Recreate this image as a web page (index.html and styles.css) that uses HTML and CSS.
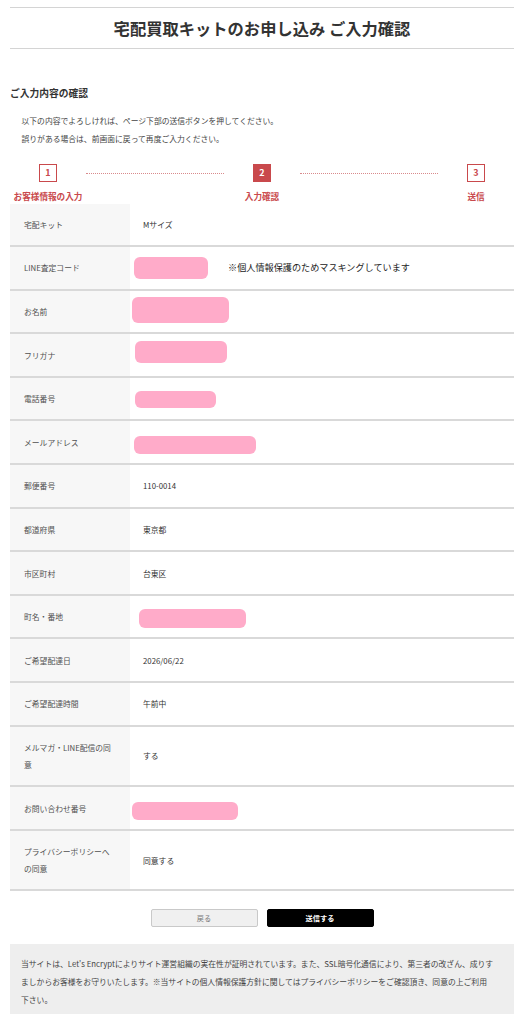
FILE: index.html
```html
<!DOCTYPE html>
<html lang="ja">
<head>
<meta charset="utf-8">
<title>宅配買取キットのお申し込み ご入力確認</title>
<link rel="stylesheet" href="styles.css">
</head>
<body>
<div class="page">
  <header class="header">
    <h1>宅配買取キットのお申し込み ご入力確認</h1>
  </header>

  <h2 class="section-title">ご入力内容の確認</h2>
  <div class="intro">
    <p>以下の内容でよろしければ、ページ下部の送信ボタンを押してください。</p>
    <p>誤りがある場合は、前画面に戻って再度ご入力ください。</p>
  </div>

  <div class="steps">
    <div class="step">
      <span class="num">1</span>
      <span class="step-label">お客様情報の入力</span>
    </div>
    <div class="step-line"></div>
    <div class="step current">
      <span class="num">2</span>
      <span class="step-label">入力確認</span>
    </div>
    <div class="step-line"></div>
    <div class="step">
      <span class="num">3</span>
      <span class="step-label">送信</span>
    </div>
  </div>

  <div class="table">
    <div class="row">
      <div class="label">宅配キット</div>
      <div class="value"><span class="val-text">Mサイズ</span></div>
    </div>
    <div class="row">
      <div class="label">LINE査定コード</div>
      <div class="value"><span class="mask mask-line"></span><span class="note">※個人情報保護のためマスキングしています</span></div>
    </div>
    <div class="row">
      <div class="label">お名前</div>
      <div class="value"><span class="mask mask-name"></span></div>
    </div>
    <div class="row">
      <div class="label">フリガナ</div>
      <div class="value"><span class="mask mask-kana"></span></div>
    </div>
    <div class="row">
      <div class="label">電話番号</div>
      <div class="value"><span class="mask mask-tel"></span></div>
    </div>
    <div class="row">
      <div class="label">メールアドレス</div>
      <div class="value"><span class="mask mask-mail"></span></div>
    </div>
    <div class="row">
      <div class="label">郵便番号</div>
      <div class="value"><span class="val-text">110-0014</span></div>
    </div>
    <div class="row">
      <div class="label">都道府県</div>
      <div class="value"><span class="val-text">東京都</span></div>
    </div>
    <div class="row">
      <div class="label">市区町村</div>
      <div class="value"><span class="val-text">台東区</span></div>
    </div>
    <div class="row">
      <div class="label">町名・番地</div>
      <div class="value"><span class="mask mask-addr"></span></div>
    </div>
    <div class="row">
      <div class="label">ご希望配達日</div>
      <div class="value"><span class="val-text">2026/06/22</span></div>
    </div>
    <div class="row">
      <div class="label">ご希望配達時間</div>
      <div class="value"><span class="val-text">午前中</span></div>
    </div>
    <div class="row">
      <div class="label">メルマガ・LINE配信の同意</div>
      <div class="value"><span class="val-text">する</span></div>
    </div>
    <div class="row">
      <div class="label">お問い合わせ番号</div>
      <div class="value"><span class="mask mask-inq"></span></div>
    </div>
    <div class="row">
      <div class="label">プライバシーポリシーへの同意</div>
      <div class="value"><span class="val-text">同意する</span></div>
    </div>
  </div>

  <div class="actions">
    <button class="btn btn-back" type="button">戻る</button>
    <button class="btn btn-submit" type="button">送信する</button>
  </div>

  <div class="notice">当サイトは、Let's Encryptによりサイト運営組織の実在性が証明されています。また、SSL暗号化通信により、第三者の改ざん、成りす<br>ましからお客様をお守りいたします。※当サイトの個人情報保護方針に関してはプライバシーポリシーをご確認頂き、同意の上ご利用<br>下さい。</div>
</div>
</body>
</html>
```

FILE: styles.css
```css
* {
  box-sizing: border-box;
}

body {
  margin: 0;
  background: #ffffff;
  color: #444444;
  font-family: "Noto Sans CJK JP", "Noto Sans", sans-serif;
}

.page {
  padding: 7px 12px 0 10px;
}

.header {
  border-top: 1.5px solid #d4d4d4;
  border-bottom: 1.5px solid #d4d4d4;
  padding: 8.5px 0;
  text-align: center;
}

.header h1 {
  margin: 0;
  font-size: 16.3px;
  line-height: 23px;
  font-weight: 700;
  color: #333333;
}

.section-title {
  margin: 36.5px 0 0;
  font-size: 9.75px;
  line-height: 14px;
  font-weight: 700;
  color: #333333;
}

.intro {
  margin-top: 12px;
  padding-left: 11.5px;
  font-size: 7.8px;
  line-height: 18px;
  color: #444444;
}

.intro p {
  margin: 0;
}

.steps {
  display: flex;
  align-items: flex-start;
  margin-top: 16px;
}

.step {
  width: 76px;
  display: flex;
  flex-direction: column;
  align-items: center;
}

.num {
  width: 18px;
  height: 18px;
  border: 1px solid #c9494c;
  color: #c9494c;
  font-size: 9px;
  font-weight: 700;
  line-height: 16px;
  text-align: center;
}

.step.current .num {
  background: #c9494c;
  color: #ffffff;
}

.step-label {
  margin-top: 8px;
  font-size: 8.6px;
  line-height: 12px;
  font-weight: 700;
  color: #c9494c;
  white-space: nowrap;
}

.step-line {
  flex: 1;
  margin-top: 9px;
  border-top: 1px dotted #d98a8c;
}

.table {
  margin-top: 2px;
}

.row {
  display: grid;
  grid-template-columns: 120px 1fr;
  border-bottom: 2px solid #d9d9d9;
}

.label {
  background: #f7f7f7;
  padding: 12.3px 14px 12.3px 14px;
  font-size: 7.8px;
  line-height: 17px;
  color: #505050;
}

.value {
  display: flex;
  align-items: center;
  font-size: 7.8px;
  line-height: 17px;
  color: #333333;
}

.val-text {
  padding-left: 13px;
}

.mask {
  display: block;
  flex: none;
  background: #ffabc9;
  border-radius: 6px;
}

.mask-line {
  margin-left: 4px;
  width: 74px;
  height: 22px;
  margin-top: 1px;
}

.mask-name {
  margin-left: 2px;
  width: 97px;
  height: 26px;
  margin-bottom: 2px;
}

.mask-kana {
  margin-left: 5px;
  width: 92px;
  height: 22px;
  margin-bottom: 7px;
}

.mask-tel {
  margin-left: 5px;
  width: 81px;
  height: 17px;
  margin-top: 1px;
}

.mask-mail {
  margin-left: 4px;
  width: 122px;
  height: 18px;
  margin-top: 5px;
}

.mask-addr {
  margin-left: 9px;
  width: 107px;
  height: 19px;
  margin-top: 4px;
}

.mask-inq {
  margin-left: 2px;
  width: 106px;
  height: 18px;
  margin-top: 6px;
}

.note {
  margin-left: 20px;
  font-size: 9.15px;
  font-weight: 400;
  color: #222222;
}

.actions {
  display: flex;
  justify-content: center;
  gap: 9px;
  margin-top: 18px;
}

.btn {
  width: 107px;
  height: 18px;
  padding: 0;
  border-radius: 2px;
  font-family: "Noto Sans CJK JP", "Noto Sans", sans-serif;
  font-size: 7.2px;
  line-height: 16px;
}

.btn-back {
  background: #f0f0f0;
  border: 1px solid #c9c9c9;
  color: #777777;
}

.btn-submit {
  background: #000000;
  border: 1px solid #000000;
  color: #ffffff;
  font-weight: 700;
}

.notice {
  margin-top: 17px;
  background: #eeeeee;
  padding: 11px 10px 5px 11px;
  font-size: 7.8px;
  line-height: 18px;
  color: #444444;
}
```
